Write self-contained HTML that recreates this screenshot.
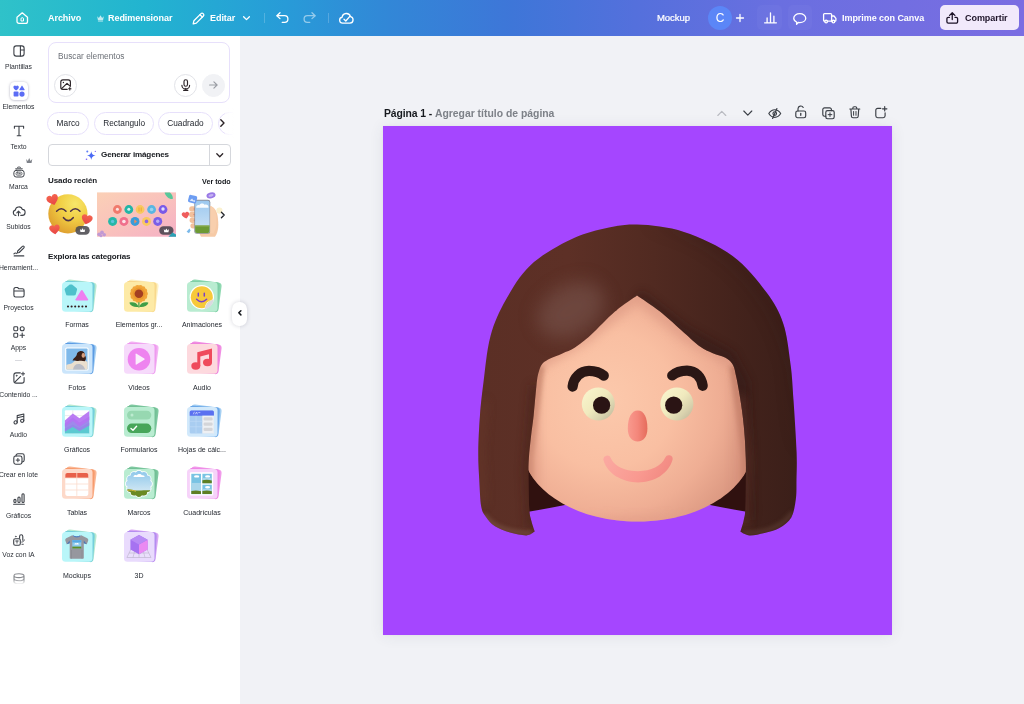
<!DOCTYPE html>
<html lang="es">
<head>
<meta charset="utf-8">
<title>Mockup - Canva</title>
<style>
*{box-sizing:border-box;margin:0;padding:0}
html,body{width:1024px;height:704px;overflow:hidden;background:#f1f2f6;font-family:"Liberation Sans",sans-serif;color:#0e1318}
.abs{position:absolute}
.t,.nav,.cat,.h,.chip,.ph,.g,#ptitle,#share span,#avatar{will-change:transform}
svg{display:block;overflow:visible}
/* ---------- top bar ---------- */
#top{position:absolute;left:0;top:0;width:1024px;height:36px;background:linear-gradient(90deg,#2fc2c9 0%,#22b4d0 14%,#289bd8 28%,#3287d7 38%,#3e76d8 50%,#5470dc 62%,#6a6fe0 76%,#7a6de2 100%)}
#top .t{position:absolute;top:12px;height:12px;line-height:12px;font-size:9px;font-weight:700;color:#fff;white-space:nowrap;letter-spacing:-.05px}
#top svg{position:absolute;fill:none;stroke:#fff;stroke-width:1.3;stroke-linecap:round;stroke-linejoin:round}
.vsep{position:absolute;top:13px;width:1px;height:10px;background:rgba(255,255,255,.2)}
.hov{position:absolute;top:5px;height:25px;border-radius:5px;background:rgba(255,255,255,.03)}
#share{position:absolute;left:940px;top:5px;width:79px;height:25px;border-radius:5px;background:#f1e9fb}
#share span{position:absolute;left:24.8px;top:7px;font-size:9px;line-height:12px;font-weight:700;color:#1d1328;letter-spacing:-.05px}
#avatar{position:absolute;left:708px;top:6px;width:24px;height:24px;border-radius:12px;background:#5b86f7;color:#fff;font-size:12px;line-height:24px;text-align:center}
/* ---------- rail ---------- */
#rail{position:absolute;left:0;top:36px;width:40px;height:668px;background:#fff}
#panel{position:absolute;left:40px;top:36px;width:200px;height:668px;background:#fff}
.nav{position:absolute;left:-10px;width:57px;text-align:center;font-size:6.8px;line-height:9px;color:#2b2f36;white-space:nowrap;letter-spacing:-.02px}
.ni{position:absolute;left:10px;width:17px;height:17px;fill:none;stroke:#3d4148;stroke-width:1.1;stroke-linecap:round;stroke-linejoin:round}
/* ---------- panel ---------- */
#search{position:absolute;left:47.500px;top:41.500px;width:182.500px;height:61px;border:1px solid #e7e0fb;border-radius:8px;background:#fff}
#search .ph{position:absolute;left:9px;top:8px;font-size:8.3px;line-height:11px;color:#6b6f76}
.cbtn{position:absolute;width:22.500px;height:22.500px;border-radius:12px;border:1px solid #e2e3e8;background:#fff}
.pic{position:absolute;fill:none;stroke:#2a2226;stroke-width:1.150;stroke-linecap:round;stroke-linejoin:round}
.chip{position:absolute;top:111.500px;height:23px;border:1px solid #e7e0fb;border-radius:12px;background:#fff;font-size:8.3px;line-height:21px;text-align:center;color:#1d2129}
#gen{position:absolute;left:47.500px;top:143.500px;width:183px;height:22.500px;border:1px solid #d5d7dc;border-radius:4px;background:#fff}
#gen .g{position:absolute;left:52.600px;top:4.800px;font-size:8.1px;letter-spacing:-.17px;line-height:11px;font-weight:700;color:#16191e;white-space:nowrap}
#gen .sep{position:absolute;left:160px;top:0;width:1px;height:20.500px;background:#d5d7dc}
.h{position:absolute;font-weight:700;color:#16191e;white-space:nowrap}
.cat{position:absolute;width:64px;text-align:center;font-size:7px;line-height:9px;color:#1d2129;white-space:nowrap}
.card{position:absolute;width:34px;height:34px}
/* ---------- canvas ---------- */
#page{position:absolute;left:383px;top:126px;width:509px;height:508.5px;background:#a546ff;overflow:hidden;box-shadow:0 1px 14px rgba(57,62,90,.09),0 0 3px rgba(57,62,90,.05)}
#ptitle{position:absolute;left:383.7px;top:106.5px;font-size:10.4px;line-height:14px;white-space:nowrap;color:#6f737b;letter-spacing:-.1px}
#ptitle b{color:#16191e;font-weight:700}
#ptitle span{font-weight:700;color:#7d8188;letter-spacing:0}
.pi{position:absolute;top:105px;width:16px;height:16px;fill:none;stroke:#3a3e45;stroke-width:1.15;stroke-linecap:round;stroke-linejoin:round}
#collapse{position:absolute;left:232.400px;top:301.800px;width:14.200px;height:23.800px;border-radius:7.100px;background:#fff;box-shadow:0 0 4px rgba(40,40,70,.2)}
</style>
</head>
<body>

<!-- ================= TOP BAR ================= -->
<div id="top">
  <!-- home -->
  <svg style="left:16px;top:12px" width="12.5" height="12" viewBox="0 0 12.5 12"><path d="M1 5.2 6.25 .8 11.5 5.2V9.4a1.9 1.9 0 0 1-1.9 1.9H2.9A1.9 1.9 0 0 1 1 9.4z"/><path d="M5 8.6V6.9a1.25 1.25 0 0 1 2.5 0v1.7z" stroke-width="1"/></svg>
  <span class="t" style="left:47.5px">Archivo</span>
  <!-- crown -->
  <svg style="left:97px;top:15px;stroke:none;fill:#fff;opacity:.72" width="7" height="6.5" viewBox="0 0 7 6.5"><path d="M.2 1.2 1.9 2.9 3.5 .3 5.1 2.9 6.8 1.2 6.1 4.9H.9z"/><rect x=".9" y="5.5" width="5.2" height=".9" rx=".3"/></svg>
  <span class="t" style="left:108px">Redimensionar</span>
  <!-- pencil -->
  <svg style="left:191.5px;top:11.5px" width="13" height="13" viewBox="0 0 13 13"><path d="M1.2 11.8l.7-3.1L9 1.6a1.5 1.5 0 0 1 2.1 0l.3.3a1.5 1.5 0 0 1 0 2.1L4.3 11.1z"/><path d="M8 2.7 10.3 5"/></svg>
  <span class="t" style="left:210px">Editar</span>
  <svg style="left:242.5px;top:16px" width="7" height="4.5" viewBox="0 0 7 4.5"><path d="M.6 .7 3.5 3.6 6.4 .7"/></svg>
  <i class="vsep" style="left:263.5px"></i>
  <!-- undo -->
  <svg style="left:276px;top:12px" width="13" height="11" viewBox="0 0 13 11"><path d="M4 .8.9 3.7 4 6.6"/><path d="M1.2 3.7H8.6a3.3 3.3 0 0 1 0 6.6H6.2"/></svg>
  <!-- redo -->
  <svg style="left:303px;top:12px;opacity:.5" width="13" height="11" viewBox="0 0 13 11"><path d="M9 .8 12.1 3.7 9 6.6"/><path d="M11.8 3.7H4.4a3.3 3.3 0 0 0 0 6.6H6.8"/></svg>
  <i class="vsep" style="left:327.5px"></i>
  <!-- cloud check -->
  <svg style="left:339px;top:11.5px" width="14.5" height="12" viewBox="0 0 14.5 12"><path d="M3.7 11.2a3 3 0 0 1-.6-5.95A4.3 4.3 0 0 1 11.5 4.6a3.35 3.35 0 0 1-.6 6.6z"/><path d="M5 7.2 6.8 9 10.6 4.6"/></svg>
  <span class="t" style="left:656.800px;font-weight:400;font-size:9.500px;-webkit-text-stroke:.22px #fff">Mockup</span>
  <div id="avatar">C</div>
  <svg style="left:735.5px;top:14px" width="8" height="8" viewBox="0 0 8 8"><path d="M4 .5v7M.5 4h7"/></svg>
  <i class="hov" style="left:756.5px;width:25px"></i>
  <i class="hov" style="left:787.5px;width:24px"></i>
  <!-- bars -->
  <svg style="left:763.5px;top:12px" width="13" height="11.5" viewBox="0 0 13 11.5"><path d="M.6 10.8H12.4M3.1 10.5V6M6.5 10.5V.8M9.9 10.5V4.2"/></svg>
  <!-- comment -->
  <svg style="left:793px;top:12.5px" width="13.5" height="12" viewBox="0 0 13.5 12"><path d="M6.75 .7c3.4 0 6 2 6 4.5s-2.6 4.4-6 4.4c-.5 0-1 0-1.5-.1L3.6 11.3V9C1.9 8.200 .75 6.8 .75 5.2.75 2.700 3.350 .7 6.750 .7z"/></svg>
  <!-- truck -->
  <svg style="left:823px;top:13px" width="13.5" height="10.5" viewBox="0 0 13.5 10.5"><path d="M1.7 8.200H1.500A.9 .9 0 0 1 .6 7.300V1.500A.9 .9 0 0 1 1.500 .6H7.700A.9 .9 0 0 1 8.600 1.500V8.200H4.500"/><path d="M8.600 3H11l1.900 2.400V7.300a.9 .9 0 0 1-.9 .9h-.3M8.600 8.200H9"/><circle cx="3.100" cy="8.600" r="1.350"/><circle cx="10.400" cy="8.600" r="1.350"/></svg>
  <span class="t" style="left:842.3px">Imprime con Canva</span>
  <div id="share"><svg style="left:6px;top:7px;stroke:#1d1328" width="12.500" height="12" viewBox="0 0 12.500 12"><path d="M6.250 7.600V.9M3.600 3.400 6.250 .8 8.900 3.400"/><path d="M3.500 5.300H2.300A1.400 1.400 0 0 0 .9 6.700V9.800A1.400 1.400 0 0 0 2.300 11.200H10.200A1.400 1.400 0 0 0 11.600 9.800V6.700A1.400 1.400 0 0 0 10.200 5.300H9"/></svg><span>Compartir</span></div>
</div>

<!-- ================= NAV RAIL ================= -->
<div id="rail"></div>
<div id="panel"></div>

<svg class="ni" style="left:12.75px;top:44.5px;width:12px;height:12px" viewBox="0 0 12 12"><rect x=".9" y=".9" width="10.2" height="10.2" rx="2.3"/><path d="M7.400 1V11M7.400 5H11"/></svg>
<div class="abs" style="left:9.5px;top:82px;width:18px;height:18px;border-radius:4.500px;background:#fff;box-shadow:0 0 3px rgba(50,50,90,.28),0 1px 2px rgba(50,50,90,.12)"></div>
<svg class="ni" style="left:12.75px;top:85px;width:12px;height:12px;fill:#5b6cf5;stroke:none" viewBox="0 0 12 12"><path d="M3.100 5.500C1.600 4.400 .4 3.400 .4 2.200A1.450 1.450 0 0 1 3.100 1.300 1.450 1.450 0 0 1 5.800 2.200C5.800 3.400 4.600 4.400 3.100 5.500z"/><path d="M8.600 .9Q9 .2 9.400 .9L11.600 4.600Q11.900 5.300 11.200 5.300H6.800Q6.100 5.300 6.400 4.600z"/><rect x=".6" y="6.600" width="4.900" height="4.900" rx=".8"/><circle cx="9" cy="9.050" r="2.600"/></svg>
<svg class="ni" style="left:12.75px;top:125.19999999999999px;width:12px;height:12px;stroke-width:1.100" viewBox="0 0 12 12"><path d="M1.400 3.200V1.300H10.600V3.200M6 1.300V10.700M4.200 10.700H7.800"/></svg>
<svg class="abs" style="left:26.200px;top:158.100px;fill:#7f838a" width="6.400" height="5.400" viewBox="0 0 7 6"><path d="M.1 1 2 3.300 3.500 .1 5 3.300 6.900 1 6.100 5.700H.9z"/></svg>
<svg class="ni" style="left:12.75px;top:165.5px;width:12px;height:12px" viewBox="0 0 12 12"><rect x=".9" y="4.300" width="10.200" height="6.700" rx="2.300" stroke-width="1"/><rect x="3" y="6.100" width="6" height="3.100" rx="1.300" stroke-width=".7"/><path d="M5.300 7.100a.65 .65 0 1 0 0 1.100M6.300 7.650a.7 .7 0 1 0 1.400 0 .7 .7 0 1 0-1.400 0" stroke-width=".55"/><path d="M2.700 2.800H9.300" stroke-width=".95"/><path d="M4.500 1.300Q6 .3 7.500 1.300" stroke-width=".9"/></svg>
<svg class="ni" style="left:12.75px;top:204.5px;width:12px;height:12px;width:13px;left:12.300px" viewBox="0 0 12 12"><path d="M3.400 10.400a2.700 2.700 0 0 1-.6-5.300 3.600 3.600 0 0 1 7-.7 3 3 0 0 1-.4 6H8.300"/><path d="M6 10.800V6.300M4.300 7.800 6 6.100 7.700 7.800"/></svg>
<svg class="ni" style="left:12.75px;top:245px;width:12px;height:12px" viewBox="0 0 12 12"><path d="M4.300 7.900 4.700 6 9.400 1.300a1.060 1.060 0 0 1 1.500 1.500L6.200 7.500z"/><path d="M.9 8.800C2 7.600 3.100 7.800 3.400 8.600M1.200 10.900H10.800"/></svg>
<svg class="ni" style="left:12.75px;top:285.6px;width:12px;height:12px" viewBox="0 0 12 12"><path d="M.9 3.200A1.700 1.700 0 0 1 2.600 1.500H4.600L5.900 2.800H9.400A1.700 1.700 0 0 1 11.100 4.500V9.300A1.700 1.700 0 0 1 9.400 11H2.600A1.700 1.700 0 0 1 .9 9.300zM.9 5H11.100"/></svg>
<svg class="ni" style="left:12.75px;top:326px;width:12px;height:12px" viewBox="0 0 12 12"><rect x=".8" y=".8" width="3.900" height="3.900" rx=".9"/><circle cx="9.200" cy="2.750" r="2"/><rect x=".8" y="7.300" width="3.900" height="3.900" rx=".9"/><path d="M9.200 7.100V11.400M7.050 9.250H11.350"/></svg>
<div class="abs" style="left:15px;top:359.500px;width:7px;height:1px;background:#d9dadf"></div>
<svg class="ni" style="left:12.75px;top:372px;width:12px;height:12px" viewBox="0 0 12 12"><path d="M7.300 .9H3.100A2.200 2.200 0 0 0 .9 3.100V8.900A2.200 2.200 0 0 0 3.100 11.100H8.900A2.200 2.200 0 0 0 11.100 8.900V5.600"/><path d="M1.600 10.300 7.600 4.300"/><path d="M10 .2V3.400M8.400 1.800H11.600" stroke-width="1"/><circle cx="3.600" cy="3.700" r=".5" fill="#33373d" stroke-width=".6"/></svg>
<svg class="ni" style="left:12.75px;top:412.8px;width:12px;height:12px" viewBox="0 0 12 12"><circle cx="2.600" cy="9.400" r="1.600"/><circle cx="9.200" cy="7.800" r="1.600"/><path d="M4.200 9.400V2.600L10.800 1V7.800M4.200 4.800 10.800 3.200"/></svg>
<svg class="ni" style="left:12.75px;top:452.7px;width:12px;height:12px" viewBox="0 0 12 12"><rect x=".8" y="3" width="8.200" height="8.200" rx="1.900"/><path d="M3 3V2.700A1.900 1.900 0 0 1 4.900 .8H9.300A1.900 1.900 0 0 1 11.200 2.700V7.100A1.900 1.900 0 0 1 9.300 9H9"/><path d="M4.900 5.400V8.800M3.200 7.100H6.600" stroke-width="1"/></svg>
<svg class="ni" style="left:12.75px;top:493px;width:12px;height:12px" viewBox="0 0 12 12"><rect x=".9" y="6.400" width="2.100" height="3.100" rx="1"/><rect x="4.950" y="4" width="2.100" height="5.500" rx="1"/><rect x="9" y=".8" width="2.100" height="8.700" rx="1"/><path d="M.6 11.300H11.400"/></svg>
<svg class="ni" style="left:12.75px;top:533.5px;width:12px;height:12px" viewBox="0 0 12 12"><rect x=".7" y="4.700" width="6.600" height="6.600" rx="1.500"/><path d="M2.700 7H5.300M4 7V9.100" stroke-width=".9"/><circle cx="2.800" cy="2.500" r=".45" fill="#33373d" stroke-width=".5"/><path d="M6.600 4.300V2.400A1.600 1.600 0 0 1 9.800 2.400V6.300"/><path d="M8.700 8.100C10.200 8 11.200 7.100 11.300 5.900M8.900 10.300H10.300" stroke-width=".9"/></svg>
<svg class="ni" style="left:12.750px;top:573.200px;width:12px;height:11px;opacity:.62" viewBox="0 0 12 11"><path d="M1 2.700C1 1.600 3.200 .8 6 .8S11 1.600 11 2.700V9C11 10.100 8.800 10.900 6 10.900S1 10.100 1 9zM1 2.700C1 3.800 3.200 4.600 6 4.600S11 3.800 11 2.700M1 5.800C1 6.900 3.200 7.700 6 7.700S11 6.900 11 5.800"/></svg>
<div class="abs" style="left:0;top:579px;width:40px;height:12px;background:linear-gradient(180deg,rgba(255,255,255,0),#fff 45%)"></div>
<div class="nav" style="top:62px">Plantillas</div>
<div class="nav" style="top:102px">Elementos</div>
<div class="nav" style="top:142px">Texto</div>
<div class="nav" style="top:182px">Marca</div>
<div class="nav" style="top:222px">Subidos</div>
<div class="nav" style="top:262.5px">Herramient...</div>
<div class="nav" style="top:303px">Proyectos</div>
<div class="nav" style="top:343px">Apps</div>
<div class="nav" style="top:389.5px">Contenido ...</div>
<div class="nav" style="top:430px">Audio</div>
<div class="nav" style="top:470px">Crear en lote</div>
<div class="nav" style="top:510.5px">Gráficos</div>
<div class="nav" style="top:550px">Voz con IA</div>

<!-- ================= PANEL ================= -->
<div id="search"><span class="ph">Buscar elementos</span></div>
<div class="cbtn" style="left:54.3px;top:74px"></div>
<div class="cbtn" style="left:174.3px;top:74px"></div>
<div class="cbtn" style="left:202px;top:74px;background:#f1f2f5;border-color:#f1f2f5"></div>
<!-- image-plus icon -->
<svg class="pic" style="left:59.7px;top:79.4px" width="11.5" height="11.5" viewBox="0 0 11.5 11.5"><path d="M7.200 10.400H2.900A2.100 2.100 0 0 1 .8 8.300V2.900A2.100 2.100 0 0 1 2.900 .8H8.300A2.100 2.100 0 0 1 10.400 2.900V6.600"/><path d="M1.600 9.700 7 4.300 10.300 7.400"/><circle cx="3.400" cy="3.500" r=".7" fill="#2a2226" stroke="none"/><path d="M9.800 8.600V11M8.600 9.800H11" stroke-width="1.100"/></svg>
<!-- mic -->
<svg class="pic" style="left:181px;top:79px" width="9.500" height="12" viewBox="0 0 9.500 12"><rect x="3" y=".7" width="3.500" height="6.500" rx="1.750"/><path d="M.9 6.200A3.850 3.850 0 0 0 8.600 6.200M4.750 9.400V11.200M2.600 11.300H6.900"/></svg>
<!-- arrow -->
<svg class="pic" style="left:208.700px;top:81.300px;stroke:#9a9da4" width="8.800" height="8" viewBox="0 0 8.800 8"><path d="M.6 4H8M4.900 .8 8.100 4 4.900 7.200"/></svg>

<div class="chip" style="left:47px;width:42.300px">Marco</div>
<div class="chip" style="left:93.800px;width:60.400px">Rectangulo</div>
<div class="chip" style="left:158.300px;width:54.900px">Cuadrado</div>
<div class="abs" style="left:215px;top:108px;width:25px;height:30px;overflow:hidden"><div class="chip" style="left:2.600px;top:3.500px;width:40px"></div></div>
<div class="abs" style="left:225px;top:108px;width:15px;height:30px;background:linear-gradient(90deg,rgba(255,255,255,.55),#fff 60%)"></div>
<svg class="pic" style="left:220.300px;top:118.500px;stroke-width:1.400" width="5" height="8" viewBox="0 0 5 8"><path d="M.8 .8 4 4 .8 7.200"/></svg>

<div id="gen"><svg class="abs" style="left:36px;top:5px" width="11.500" height="11" viewBox="0 0 11.500 11"><path d="M6.300 1.200C6.800 4 7.600 4.900 10.600 5.600 7.600 6.300 6.800 7.200 6.300 10 5.800 7.200 5 6.300 2 5.600 5 4.900 5.800 4 6.300 1.200z" fill="#4a6af5"/><circle cx="2.300" cy="1.500" r="1" fill="#5b7cf8"/><circle cx="1.500" cy="9.300" r=".8" fill="#7d5cf5"/><circle cx="10.300" cy="1.400" r=".6" fill="#7d5cf5"/></svg><span class="g">Generar imágenes</span><i class="sep"></i><svg class="pic" style="left:167.500px;top:8.700px;stroke-width:1.300" width="7.500" height="4.800" viewBox="0 0 7.500 4.800"><path d="M.8 .8 3.750 3.800 6.700 .8"/></svg></div>

<div class="h" style="left:47.6px;top:175px;font-size:8px;line-height:12px;letter-spacing:-.1px">Usado recién</div>
<div class="h" style="left:201.5px;top:176px;font-size:7.2px;line-height:11px">Ver todo</div>
<!-- recently used -->
<svg class="abs" style="left:44px;top:188px" width="196" height="54" viewBox="44 188 196 54">
<defs>
<radialGradient id="em" cx=".68" cy=".25" r=".85"><stop offset="0" stop-color="#f7e66a"/><stop offset=".45" stop-color="#f1cf45"/><stop offset="1" stop-color="#dd9a2c"/></radialGradient>
<linearGradient id="pk" x1="0" y1="0" x2="1" y2="1"><stop offset="0" stop-color="#fbd0b6"/><stop offset=".55" stop-color="#f9c0bd"/><stop offset="1" stop-color="#f5b0c6"/></linearGradient>
<linearGradient id="sky" x1="0" y1="0" x2="0" y2="1"><stop offset="0" stop-color="#9cc8ef"/><stop offset="1" stop-color="#cfe4f6"/></linearGradient>
<linearGradient id="ht" x1="0" y1="0" x2="0" y2="1"><stop offset="0" stop-color="#f4644f"/><stop offset="1" stop-color="#e84545"/></linearGradient>
</defs>
<!-- emoji -->
<circle cx="67.900" cy="213.800" r="19.600" fill="url(#em)"/>
<path d="M56.600 211.300Q61.300 206.300 66 211.300M70.600 211.300Q75.300 206.300 80 211.300" fill="none" stroke="#4d3248" stroke-width="1.500" stroke-linecap="round"/>
<path d="M63.500 217.700Q68.300 223.600 73.200 217.700" fill="none" stroke="#4d3248" stroke-width="1.600" stroke-linecap="round"/>
<path d="M0 3.400C-2.600 1.500-4.600-.3-4.600-2.300A2.450 2.450 0 0 1 0-3.400 2.450 2.450 0 0 1 4.600-2.300C4.600-.3 2.600 1.500 0 3.400z" fill="url(#ht)" transform="translate(53 200.800) rotate(-18) scale(1.280)"/>
<path d="M0 3.400C-2.600 1.500-4.600-.3-4.600-2.300A2.450 2.450 0 0 1 0-3.400 2.450 2.450 0 0 1 4.600-2.300C4.600-.3 2.600 1.500 0 3.400z" fill="url(#ht)" transform="translate(86.600 220.300) rotate(14) scale(1.200)"/>
<path d="M0 3.400C-2.600 1.500-4.600-.3-4.600-2.300A2.450 2.450 0 0 1 0-3.400 2.450 2.450 0 0 1 4.600-2.300C4.600-.3 2.600 1.500 0 3.400z" fill="url(#ht)" transform="translate(54.800 230.300) rotate(-8) scale(1.150)"/>
<rect x="75.400" y="226.100" width="14.300" height="8.600" rx="4.300" fill="#4b4a50" opacity=".88"/>
<g transform="translate(82.550 230.500)"><path d="M-2.600 -1.500 -1.250 -.2 0 -2.200 1.250 -.2 2.600 -1.500 2.100 1.600H-2.100z" fill="#fff"/></g>
<!-- pink banner -->
<rect x="97" y="192.400" width="79" height="44.300" fill="url(#pk)"/>
<g>
<circle cx="117.400" cy="209.500" r="4.400" fill="#f07a6c"/><circle cx="128.800" cy="209.500" r="4.400" fill="#22b5a6"/><circle cx="140.100" cy="209.500" r="4.400" fill="#f9c85e"/><circle cx="151.600" cy="209.500" r="4.400" fill="#5ab6e2"/><circle cx="163" cy="209.500" r="4.400" fill="#7a5ae8"/>
<circle cx="112.600" cy="221.400" r="4.500" fill="#24b8a8"/><circle cx="123.900" cy="221.400" r="4.500" fill="#f0708c"/><circle cx="135" cy="221.400" r="4.500" fill="#3a9cd9"/><circle cx="146.500" cy="221.400" r="4.500" fill="#f9c85e"/><circle cx="157.700" cy="221.400" r="4.500" fill="#7a5ee8"/>
<g fill="#fff" opacity=".8"><circle cx="117.400" cy="209.300" r="1.500"/><circle cx="128.800" cy="209.300" r="1.500"/><circle cx="151.600" cy="209.500" r="1.800" opacity=".5"/><circle cx="163" cy="209" r="1.700"/><circle cx="123.900" cy="221.500" r="1.800"/><circle cx="157.700" cy="221.200" r="1.700" opacity=".6"/></g>
<circle cx="146.500" cy="221.400" r="1.800" fill="#8a66e8"/><circle cx="112.600" cy="221.400" r="1.700" fill="#69c8e8" opacity=".8"/><path d="M134.300 219.200 137 221.400 134.300 223.600z" fill="#f08a5a"/><path d="M139 207.500V211.500M141.200 207.500V211.500" stroke="#f2a030" stroke-width=".9"/>
</g>
<path d="M164.600 192.400C165.500 196 169 199.500 172.700 199 173.300 196.500 171.500 193.500 169.800 192.400z" fill="#58c79a"/>
<g fill="#b793d9" opacity=".85"><circle cx="99.200" cy="234.300" r="1.900"/><circle cx="102" cy="232.400" r="1.900"/><circle cx="104.200" cy="234.800" r="1.800"/><circle cx="101" cy="235.800" r="1.500"/></g>
<rect x="159.200" y="226.300" width="14.300" height="8.500" rx="4.250" fill="#4b4550" opacity=".9"/>
<g transform="translate(166.350 230.600)"><path d="M-2.600 -1.500 -1.250 -.2 0 -2.200 1.250 -.2 2.600 -1.500 2.100 1.600H-2.100z" fill="#fff"/></g>
<path d="M168.400 236.700 172.500 232.500 176 234.500V236.700z" fill="#2ba1b5"/>
<!-- phone in hand -->
<path d="M206 206.500C212 204.500 216.500 209 217.600 216 218.800 224 218.800 231.500 215 236.800H201C199 233 197 229 197 222z" fill="#f6caa6"/>
<g fill="#f2c09b"><rect x="189.200" y="206.200" width="7" height="5.400" rx="2.700"/><rect x="189" y="211.800" width="7" height="5.600" rx="2.800"/><rect x="189.600" y="217.600" width="6.600" height="5.400" rx="2.700"/><rect x="190.400" y="223.200" width="6" height="5.200" rx="2.600"/></g>
<g fill="#e27a6a"><circle cx="194.300" cy="209" r=".8"/><circle cx="194.200" cy="214.600" r=".8"/><circle cx="194.500" cy="220.200" r=".8"/></g>
<rect x="194.300" y="199.800" width="16" height="34" rx="2.400" fill="#8b909c"/>
<rect x="195.100" y="200.700" width="14.400" height="32.300" rx="1.800" fill="url(#sky)"/>
<path d="M195.100 225.500H209.500V231.200A1.800 1.800 0 0 1 207.700 233H196.900A1.800 1.800 0 0 1 195.100 231.200z" fill="#6d9a34"/>
<path d="M195.100 225.500H209.500V226.600H195.100z" fill="#8eae52"/>
<path d="M196.200 207.800C196 205.500 198 204.700 199.300 205.300 200 203.300 203.500 203 204.500 204.800 206.500 204 208.700 205 208.500 207.800z" fill="#fff" opacity=".92"/>
<path d="M210.300 206C213.500 206.500 215.800 210.500 216.300 216.500 216.800 223 216.200 229 213.500 233.500L210.300 233z" fill="#f8cfad"/>
<g transform="rotate(14 192.600 199.200)"><rect x="188.400" y="195.400" width="8.400" height="7.600" rx="1.700" fill="#6d9df2"/><path d="M190 201.300 192 198.500 193.600 200.300 194.600 199.300 195.700 201.300z" fill="#dfeafc"/></g>
<ellipse cx="211" cy="195.400" rx="4.600" ry="3" fill="#9a7ae6" transform="rotate(-14 211 195.400)"/><ellipse cx="211" cy="195.400" rx="2.600" ry="1.300" fill="#c4b2f2" transform="rotate(-14 211 195.400)"/>
<path d="M0 3.400C-2.600 1.500-4.600-.3-4.600-2.300A2.450 2.450 0 0 1 0-3.400 2.450 2.450 0 0 1 4.600-2.300C4.600-.3 2.600 1.500 0 3.400z" fill="#ef5d5d" transform="translate(185.800 215.800) rotate(-12) scale(.82)"/>
<path d="M186.600 231.800 189.400 228.600 190.600 230.400 189 233.200z" fill="#7ab9ea"/>
<circle cx="219.400" cy="210.600" r="3.100" fill="#fbf1cf"/>
<path d="M221.400 212.200 224.200 215 221.400 217.800" fill="none" stroke="#23252b" stroke-width="1.300" stroke-linecap="round" stroke-linejoin="round"/>
</svg>
<div class="h" style="left:47.6px;top:250.5px;font-size:8px;line-height:12px;letter-spacing:-.12px">Explora las categorías</div>

<!--CARDS-->
<svg class="abs" style="left:57.8px;top:277.2px" width="42" height="40" viewBox="0 0 42 40">
<rect x="4" y="5" width="30.5" height="29.8" rx="3.6" fill="#b9ead0" transform="translate(2.7 -1.1) rotate(7.500 19.25 19.9)"/>
<rect x="4" y="5" width="30.5" height="29.8" rx="3.6" fill="#74cfdb" transform="translate(1.500 -.5) rotate(3.800 19.25 19.9)"/>
<rect x="4" y="5" width="30.5" height="29.8" rx="3.600" fill="#b9f6f9"/>
<g transform="translate(4 5)"><path d="M8.800 2.600C9.800 2.100 10.600 2.900 11.300 3.600L14.600 6.200C15.300 6.700 15.100 7.500 14.900 8.300L13.800 12.300C13.600 13.200 12.900 13.400 12.100 13.400H5.700C4.900 13.400 4.200 13.200 4 12.300L2.800 8.300C2.600 7.500 2.500 6.700 3.200 6.200L6.500 3.600C7.200 3 7.900 2.200 8.800 2.600z" fill="#4fc1cb"/><path d="M18.800 8.800Q19.800 7.200 20.800 8.800L26 17.200Q26.600 18.600 25 18.600H14.600Q13 18.600 13.600 17.200z" fill="#ee80f0"/><g fill="#33191b"><circle cx="6" cy="24.500" r="1.050"/><circle cx="9.600" cy="24.500" r="1.050"/><circle cx="13.200" cy="24.500" r="1.050"/><circle cx="16.800" cy="24.500" r="1.050"/><circle cx="20.400" cy="24.500" r="1.050"/><circle cx="24" cy="24.500" r="1.050"/></g></g>
</svg>
<svg class="abs" style="left:120.3px;top:277.2px" width="42" height="40" viewBox="0 0 42 40">
<rect x="4" y="5" width="30.5" height="29.8" rx="3.6" fill="#fdf1c4" transform="translate(2.7 -1.1) rotate(7.500 19.25 19.9)"/>
<rect x="4" y="5" width="30.5" height="29.8" rx="3.6" fill="#f8d88c" transform="translate(1.500 -.5) rotate(3.800 19.25 19.9)"/>
<rect x="4" y="5" width="30.5" height="29.8" rx="3.600" fill="#fdeaa6"/>
<g transform="translate(4 5)"><path d="M14.300 17H15.500V25.500H14.300z" fill="#3c9a45"/><path d="M14.600 24.800C11 25.500 6.800 24.500 5.300 20.800 9 19.500 13 20.800 14.600 24.800zM15.200 24.800C18.800 25.500 23 24.500 24.500 20.800 20.800 19.500 16.800 20.800 15.200 24.800z" fill="#3f9e48"/><g fill="#f2a63a"><circle cx="21.60" cy="11.80" r="2.300"/><circle cx="20.94" cy="14.71" r="2.300"/><circle cx="19.08" cy="17.04" r="2.300"/><circle cx="16.39" cy="18.33" r="2.300"/><circle cx="13.41" cy="18.33" r="2.300"/><circle cx="10.72" cy="17.04" r="2.300"/><circle cx="8.86" cy="14.71" r="2.300"/><circle cx="8.20" cy="11.80" r="2.300"/><circle cx="8.86" cy="8.89" r="2.300"/><circle cx="10.72" cy="6.56" r="2.300"/><circle cx="13.41" cy="5.27" r="2.300"/><circle cx="16.39" cy="5.27" r="2.300"/><circle cx="19.08" cy="6.56" r="2.300"/><circle cx="20.94" cy="8.89" r="2.300"/><circle cx="14.900" cy="11.800" r="6.800"/></g><circle cx="14.900" cy="11.800" r="6.200" fill="#eb9a2f"/><circle cx="14.900" cy="11.800" r="4.300" fill="#a43f22"/></g>
</svg>
<svg class="abs" style="left:183.1px;top:277.2px" width="42" height="40" viewBox="0 0 42 40">
<rect x="4" y="5" width="30.5" height="29.8" rx="3.6" fill="#8fd9b1" transform="translate(2.7 -1.1) rotate(7.500 19.25 19.9)"/>
<rect x="4" y="5" width="30.5" height="29.8" rx="3.6" fill="#7fcfa6" transform="translate(1.500 -.5) rotate(3.800 19.25 19.9)"/>
<rect x="4" y="5" width="30.5" height="29.8" rx="3.600" fill="#b9ecd1"/>
<g transform="translate(4 5)"><circle cx="14.800" cy="15.200" r="12.200" fill="#fff"/><circle cx="14.800" cy="15.200" r="11" fill="#f7c93a"/><path d="M11.300 11.300V14M17.300 11.300V14" stroke="#7a3fc8" stroke-width="1.500" stroke-linecap="round"/><path d="M9.600 17.300Q14.500 22.200 19.600 17.300" fill="none" stroke="#7a3fc8" stroke-width="1.500" stroke-linecap="round"/><path d="M26.800 17.500C26 22.500 23 26 17.600 27.200 18.500 23 21.500 18.500 26.800 17.500z" fill="#d9dadf"/><path d="M26.800 17.500C22.500 18.200 19 21.500 17.600 27.200 17.800 22 21 18 26.800 17.500z" fill="#fff"/></g>
</svg>
<svg class="abs" style="left:57.8px;top:339.4px" width="42" height="40" viewBox="0 0 42 40">
<rect x="4" y="5" width="30.5" height="29.8" rx="3.6" fill="#a5cff2" transform="translate(2.7 -1.1) rotate(7.500 19.25 19.9)"/>
<rect x="4" y="5" width="30.5" height="29.8" rx="3.6" fill="#5b9be3" transform="translate(1.500 -.5) rotate(3.800 19.25 19.9)"/>
<rect x="4" y="5" width="30.5" height="29.8" rx="3.600" fill="#cbe5fb"/>
<g transform="translate(4 5)"><rect x="3.200" y="3.400" width="23.400" height="23.200" rx="1.500" fill="#fff"/><rect x="4.300" y="4.500" width="21.200" height="21" rx=".8" fill="#7fb9ea"/><path d="M4.300 21C7 19.500 9 20.500 11 18.500 13 16 16 15.500 19 15.500 22.500 15.500 25.500 17.500 25.500 19V25.500H4.300z" fill="#eadfce"/><path d="M11 25.500C11.500 22 13.500 20 16.500 20 20 20 22.500 22.500 23 25.500z" fill="#b9bcc6"/><path d="M17.800 7.200C21 6.500 23.300 8.800 23 11.500 24.500 13.500 24 16 22.800 17.200 21 16.800 19.500 16.500 18 16.800 14 17.500 12 15.500 10.600 17 11.500 13.500 14.500 13 14.800 10.500 15 8.800 16 7.600 17.800 7.200z" fill="#3a2019"/><ellipse cx="21.300" cy="11.400" rx="1.700" ry="2.300" fill="#d9a182"/></g>
</svg>
<svg class="abs" style="left:120.3px;top:339.4px" width="42" height="40" viewBox="0 0 42 40">
<rect x="4" y="5" width="30.5" height="29.8" rx="3.6" fill="#f3b3f3" transform="translate(2.7 -1.1) rotate(7.500 19.25 19.9)"/>
<rect x="4" y="5" width="30.5" height="29.8" rx="3.6" fill="#ee9aef" transform="translate(1.500 -.5) rotate(3.800 19.25 19.9)"/>
<rect x="4" y="5" width="30.5" height="29.8" rx="3.600" fill="#f6dafb"/>
<g transform="translate(4 5)"><circle cx="15" cy="15.200" r="11.300" fill="#ee84ef"/><path d="M11.600 10.200Q11.600 9.300 12.500 9.800L20.300 14.500Q21.100 15.200 20.300 15.800L12.500 20.500Q11.600 21 11.600 20.100z" fill="#fbeefc"/></g>
</svg>
<svg class="abs" style="left:183.1px;top:339.4px" width="42" height="40" viewBox="0 0 42 40">
<rect x="4" y="5" width="30.5" height="29.8" rx="3.6" fill="#f08fe3" transform="translate(2.7 -1.1) rotate(7.500 19.25 19.9)"/>
<rect x="4" y="5" width="30.5" height="29.8" rx="3.6" fill="#ee82dc" transform="translate(1.500 -.5) rotate(3.800 19.25 19.9)"/>
<rect x="4" y="5" width="30.5" height="29.8" rx="3.600" fill="#fdd9de"/>
<g transform="translate(4 5)"><path d="M10.300 8.200 25 4.600V18.400H22V10.300L13.300 12.500V22H10.300z" fill="#ef4a5c"/><ellipse cx="8.800" cy="22" rx="4.500" ry="3.700" fill="#ef4a5c"/><ellipse cx="20.500" cy="18.500" rx="4.500" ry="3.700" fill="#ef4a5c"/></g>
</svg>
<svg class="abs" style="left:57.8px;top:402.0px" width="42" height="40" viewBox="0 0 42 40">
<rect x="4" y="5" width="30.5" height="29.8" rx="3.6" fill="#b9ead0" transform="translate(2.7 -1.1) rotate(7.500 19.25 19.9)"/>
<rect x="4" y="5" width="30.5" height="29.8" rx="3.6" fill="#74cfdb" transform="translate(1.500 -.5) rotate(3.800 19.25 19.9)"/>
<rect x="4" y="5" width="30.5" height="29.8" rx="3.600" fill="#b9f6f9"/>
<g transform="translate(4 5)"><rect x="2.900" y="3.300" width="24.400" height="23.300" rx="1" fill="#fff"/><path d="M2.900 8.600H27.300M2.900 13.600H27.300M10.800 3.300V26.600" stroke="#e3e3e8" stroke-width=".7"/><path d="M2.900 21.500 10.800 17.500 17.500 21 27.300 15.500V26.600H2.900z" fill="#5cc9d1"/><path d="M2.900 16.500 10.800 10.500 17.500 15.500 27.300 9.500V18.500L17.500 24 10.800 20 2.900 24.500z" fill="#9a83ea" opacity=".95"/><path d="M2.900 13.500 10.800 6.600 17.500 11.300 27.300 4V13L17.500 19.500 10.800 14 2.900 19.500z" fill="#b472f2" opacity=".92"/></g>
</svg>
<svg class="abs" style="left:120.3px;top:402.0px" width="42" height="40" viewBox="0 0 42 40">
<rect x="4" y="5" width="30.5" height="29.8" rx="3.6" fill="#7fc9a1" transform="translate(2.7 -1.1) rotate(7.500 19.25 19.9)"/>
<rect x="4" y="5" width="30.5" height="29.8" rx="3.6" fill="#73c096" transform="translate(1.500 -.5) rotate(3.800 19.25 19.9)"/>
<rect x="4" y="5" width="30.5" height="29.8" rx="3.600" fill="#b9ecd1"/>
<g transform="translate(4 5)"><rect x="3" y="3.700" width="24.300" height="8.800" rx="4.400" fill="#97d8b1"/><circle cx="8" cy="8.100" r="1.500" fill="#bdebd0"/><rect x="3" y="16.600" width="24.300" height="9.500" rx="4.750" fill="#47a65a"/><path d="M7 21.500 9 23.300 12.600 19.300" fill="none" stroke="#fff" stroke-width="1.400" stroke-linecap="round" stroke-linejoin="round"/></g>
</svg>
<svg class="abs" style="left:183.1px;top:402.0px" width="42" height="40" viewBox="0 0 42 40">
<rect x="4" y="5" width="30.5" height="29.8" rx="3.6" fill="#a5cff2" transform="translate(2.7 -1.1) rotate(7.500 19.25 19.9)"/>
<rect x="4" y="5" width="30.5" height="29.8" rx="3.6" fill="#6aa7e8" transform="translate(1.500 -.5) rotate(3.800 19.25 19.9)"/>
<rect x="4" y="5" width="30.5" height="29.8" rx="3.600" fill="#d2e9fb"/>
<g transform="translate(4 5)"><rect x="2.700" y="3.400" width="24.200" height="23.200" rx="1.500" fill="#a9cdf1"/><path d="M2.700 4.900A1.500 1.500 0 0 1 4.200 3.400H25.400A1.500 1.500 0 0 1 26.900 4.900V8.700H2.700z" fill="#5a70f0"/><path d="M6.300 7.300 7.400 4.800M8.300 7.300 9.600 5 10.400 7.300M11.300 5.600H13.300" stroke="#dfe6fd" stroke-width=".7" fill="none"/><rect x="15.300" y="8.700" width="11.600" height="17.900" fill="#eef0f3"/><g fill="#d4d5d9"><rect x="16.600" y="10.300" width="9" height="3.200" rx="1.200"/><rect x="16.600" y="15.500" width="9" height="3.200" rx="1.200"/><rect x="16.600" y="20.700" width="9" height="3.200" rx="1.200"/></g><path d="M2.700 14.300H15.300M2.700 19.800H15.300M9 8.700V26.600" stroke="#c3dcf6" stroke-width=".6"/></g>
</svg>
<svg class="abs" style="left:57.8px;top:464.2px" width="42" height="40" viewBox="0 0 42 40">
<rect x="4" y="5" width="30.5" height="29.8" rx="3.6" fill="#fbb795" transform="translate(2.7 -1.1) rotate(7.500 19.25 19.9)"/>
<rect x="4" y="5" width="30.5" height="29.8" rx="3.6" fill="#f69a6c" transform="translate(1.500 -.5) rotate(3.800 19.25 19.9)"/>
<rect x="4" y="5" width="30.5" height="29.8" rx="3.600" fill="#fdd9c9"/>
<g transform="translate(4 5)"><rect x="3.300" y="3.900" width="23" height="23" rx="1.800" fill="#fff"/><path d="M3.300 5.700A1.800 1.800 0 0 1 5.100 3.900H24.500A1.800 1.800 0 0 1 26.300 5.700V9H3.300z" fill="#e8604a"/><path d="M14.800 3.900V26.900M3.300 9H26.300M3.300 15H26.300M3.300 21H26.300" stroke="#fbdccd" stroke-width=".8"/></g>
</svg>
<svg class="abs" style="left:120.3px;top:464.2px" width="42" height="40" viewBox="0 0 42 40">
<rect x="4" y="5" width="30.5" height="29.8" rx="3.6" fill="#7fc9a1" transform="translate(2.7 -1.1) rotate(7.500 19.25 19.9)"/>
<rect x="4" y="5" width="30.5" height="29.8" rx="3.6" fill="#73c096" transform="translate(1.500 -.5) rotate(3.800 19.25 19.9)"/>
<rect x="4" y="5" width="30.5" height="29.8" rx="3.600" fill="#b9ecd1"/>
<g transform="translate(4 5)"><defs><clipPath id="scl"><circle cx="24.50" cy="14.80" r="3.500"/><circle cx="23.21" cy="19.60" r="3.500"/><circle cx="19.70" cy="23.11" r="3.500"/><circle cx="14.90" cy="24.40" r="3.500"/><circle cx="10.10" cy="23.11" r="3.500"/><circle cx="6.59" cy="19.60" r="3.500"/><circle cx="5.30" cy="14.80" r="3.500"/><circle cx="6.59" cy="10.00" r="3.500"/><circle cx="10.10" cy="6.49" r="3.500"/><circle cx="14.90" cy="5.20" r="3.500"/><circle cx="19.70" cy="6.49" r="3.500"/><circle cx="23.21" cy="10.00" r="3.500"/><circle cx="14.900" cy="14.800" r="10.500"/></clipPath><linearGradient id="sk2" x1="0" y1="0" x2="0" y2="1"><stop offset="0" stop-color="#8ac6ea"/><stop offset=".75" stop-color="#cfe6f3"/></linearGradient></defs><g fill="#fff"><circle cx="24.50" cy="14.80" r="4.300"/><circle cx="23.21" cy="19.60" r="4.300"/><circle cx="19.70" cy="23.11" r="4.300"/><circle cx="14.90" cy="24.40" r="4.300"/><circle cx="10.10" cy="23.11" r="4.300"/><circle cx="6.59" cy="19.60" r="4.300"/><circle cx="5.30" cy="14.80" r="4.300"/><circle cx="6.59" cy="10.00" r="4.300"/><circle cx="10.10" cy="6.49" r="4.300"/><circle cx="14.90" cy="5.20" r="4.300"/><circle cx="19.70" cy="6.49" r="4.300"/><circle cx="23.21" cy="10.00" r="4.300"/><circle cx="14.900" cy="14.800" r="11"/></g><g clip-path="url(#scl)"><rect x="1" y="1" width="28" height="28" fill="url(#sk2)"/><path d="M9.500 8C9.500 6 12 5.500 12.800 6.500 13.500 4.500 17 4.500 17.800 6.300 19.500 5.800 21 7 20.500 8z" fill="#fff"/><path d="M1 21C5 19.500 8 21 11 21.500 15 22 20 20.500 29 21.500V29H1z" fill="#6b8a22"/><path d="M3 21.500C6 20.500 9 21.500 12 22.200" stroke="#d8b93a" stroke-width="1" fill="none"/></g></g>
</svg>
<svg class="abs" style="left:183.1px;top:464.2px" width="42" height="40" viewBox="0 0 42 40">
<rect x="4" y="5" width="30.5" height="29.8" rx="3.6" fill="#f19bea" transform="translate(2.7 -1.1) rotate(7.500 19.25 19.9)"/>
<rect x="4" y="5" width="30.5" height="29.8" rx="3.6" fill="#ee86e6" transform="translate(1.500 -.5) rotate(3.800 19.25 19.9)"/>
<rect x="4" y="5" width="30.5" height="29.8" rx="3.600" fill="#f6d3f9"/>
<g transform="translate(4 5)"><rect x="2.900" y="3.300" width="23.300" height="23.300" rx="1" fill="#fff"/><rect x="4.3" y="4.8" width="9.7" height="20.3" fill="#79c3e3"/><rect x="4.3" y="13.93" width="9.7" height="11.17" fill="#a9d6ea"/><path d="M4.3 22.10Q9.15 20.90 14.0 22.30V25.1H4.3z" fill="#5e7f22"/><ellipse cx="9.65" cy="7.40" rx="2.62" ry="1.200" fill="#fff"/><rect x="15.4" y="4.8" width="9.4" height="9.4" fill="#79c3e3"/><rect x="15.4" y="9.03" width="9.4" height="5.17" fill="#a9d6ea"/><path d="M15.4 11.20Q20.10 10.00 24.8 11.40V14.2H15.4z" fill="#5e7f22"/><ellipse cx="20.60" cy="7.40" rx="2.54" ry="1.200" fill="#fff"/><rect x="15.4" y="15.7" width="9.4" height="9.4" fill="#79c3e3"/><rect x="15.4" y="19.93" width="9.4" height="5.17" fill="#a9d6ea"/><path d="M15.4 22.10Q20.10 20.90 24.8 22.30V25.1H15.4z" fill="#5e7f22"/><ellipse cx="20.60" cy="18.30" rx="2.54" ry="1.200" fill="#fff"/></g>
</svg>
<svg class="abs" style="left:57.8px;top:526.6px" width="42" height="40" viewBox="0 0 42 40">
<rect x="4" y="5" width="30.5" height="29.8" rx="3.6" fill="#b9ead0" transform="translate(2.7 -1.1) rotate(7.500 19.25 19.9)"/>
<rect x="4" y="5" width="30.5" height="29.8" rx="3.6" fill="#74cfdb" transform="translate(1.500 -.5) rotate(3.800 19.25 19.9)"/>
<rect x="4" y="5" width="30.5" height="29.8" rx="3.600" fill="#b9f6f9"/>
<g transform="translate(4 5)"><path d="M10.300 3.300C12 4.600 17.500 4.600 19.200 3.300L25.300 6.300Q26.600 7.200 26.200 8.600L24.800 12.200 21.800 11.300V26Q21.800 26.800 21 26.800H8.500Q7.700 26.800 7.700 26V11.300L4.700 12.200 3.300 8.600Q2.900 7.200 4.200 6.300z" fill="#96979e"/><path d="M11.300 3.700C13 5.300 16.500 5.300 18.200 3.700" fill="none" stroke="#3f78c9" stroke-width="1"/><path d="M4.700 12.200 7.700 11.300V8.500zM24.800 12.200 21.800 11.300V8.500z" fill="#4a77b8"/><rect x="10.300" y="8.200" width="9" height="8.300" fill="#8ecbee"/><rect x="10.300" y="8.200" width="9" height="2.200" fill="#56a9e3"/><path d="M12.500 12.500C12.500 11.300 13.800 11 14.300 11.600 14.800 10.600 16.600 10.800 16.800 12.500z" fill="#fff"/><rect x="10.300" y="14.600" width="9" height="1.900" fill="#5f8f24"/><path d="M9.500 18V26.800M20 18V26.800" stroke="#7a7b82" stroke-width=".6" opacity=".6"/></g>
</svg>
<svg class="abs" style="left:120.3px;top:526.6px" width="42" height="40" viewBox="0 0 42 40">
<rect x="4" y="5" width="30.5" height="29.8" rx="3.6" fill="#d9a8f3" transform="translate(2.7 -1.1) rotate(7.500 19.25 19.9)"/>
<rect x="4" y="5" width="30.5" height="29.8" rx="3.6" fill="#b48df0" transform="translate(1.500 -.5) rotate(3.800 19.25 19.9)"/>
<rect x="4" y="5" width="30.5" height="29.8" rx="3.600" fill="#e9dbfd"/>
<g transform="translate(4 5)"><path d="M7.300 16.500 2.900 25.500H27L22.600 16.500z" fill="#eadffc" stroke="#b8b0c8" stroke-width=".6" stroke-linejoin="round"/><path d="M5.100 21H24.800M15 16.500V25.500M11.300 16.500 9 25.500M18.600 16.500 21 25.500" stroke="#b8b0c8" stroke-width=".55" fill="none"/><path d="M15 3 23.600 7.800V17.400L15 22.300 6.400 17.400V7.800z" fill="#a672f1"/><path d="M15 12.600 23.600 7.800V17.400L15 22.300z" fill="#ea8af2"/><path d="M15 3 23.600 7.800 15 12.600 6.400 7.800z" fill="#b88af5"/></g>
</svg>
<!--/CARDS-->
<div class="cat" style="left:45px;top:320px">Formas</div>
<div class="cat" style="left:107px;top:320px">Elementos gr...</div>
<div class="cat" style="left:169.5px;top:320px">Animaciones</div>
<div class="cat" style="left:45px;top:382.5px">Fotos</div>
<div class="cat" style="left:107px;top:382.5px">Videos</div>
<div class="cat" style="left:169.5px;top:382.5px">Audio</div>
<div class="cat" style="left:45px;top:445px">Gráficos</div>
<div class="cat" style="left:107px;top:445px">Formularios</div>
<div class="cat" style="left:169.5px;top:445px">Hojas de cálc...</div>
<div class="cat" style="left:45px;top:507.5px">Tablas</div>
<div class="cat" style="left:107px;top:507.5px">Marcos</div>
<div class="cat" style="left:169.5px;top:507.5px">Cuadrículas</div>
<div class="cat" style="left:45px;top:570.5px">Mockups</div>
<div class="cat" style="left:107px;top:570.5px">3D</div>

<div id="collapse"><svg class="pic" style="left:5.500px;top:8.300px;stroke-width:1.500;stroke:#16191e" width="3.600" height="5.600" viewBox="0 0 3.600 5.600"><path d="M2.900 .7 .8 2.800 2.900 4.900"/></svg></div>

<!-- ================= CANVAS ================= -->
<!-- page toolbar -->
<svg class="pi" style="left:716.500px;top:109.500px;width:9.600px;height:6.400px;stroke:#b9bbc1" viewBox="0 0 9.600 6.400"><path d="M.8 5.500 4.800 1.300 8.800 5.500"/></svg>
<svg class="pi" style="left:743px;top:109.600px;width:9.600px;height:6.400px" viewBox="0 0 9.600 6.400"><path d="M.8 1 4.800 5.200 8.800 1"/></svg>
<svg class="pi" style="left:767.500px;top:107.500px;width:13.500px;height:11px" viewBox="0 0 13.500 11"><path d="M.8 5.500C2.300 3 4.300 1.700 6.750 1.700S11.200 3 12.700 5.500C11.200 8 9.200 9.300 6.750 9.300S2.300 8 .8 5.500z"/><circle cx="6.750" cy="5.500" r="1.800"/><path d="M8.900 .6 4.600 10.400" stroke-width="1.200"/></svg>
<svg class="pi" style="left:795.300px;top:105.300px;width:11.500px;height:13.500px" viewBox="0 0 11.500 13.500"><rect x=".8" y="6" width="9.900" height="6.700" rx="1.700"/><path d="M3 6V3.700A2.750 2.750 0 0 1 8.200 2.500"/><path d="M5.750 8.500V10.300" stroke-width="1.300"/></svg>
<svg class="pi" style="left:821.700px;top:106.500px;width:13px;height:12.500px" viewBox="0 0 13 12.500"><rect x="3.800" y="3.600" width="8.400" height="8.100" rx="1.700"/><path d="M3.800 9.200H2.500A1.700 1.700 0 0 1 .8 7.500V2.500A1.700 1.700 0 0 1 2.500 .8H7.700A1.700 1.700 0 0 1 9.400 2.500V3.600"/><path d="M8 5.800V9.500M6.150 7.650H9.850" stroke-width="1"/></svg>
<svg class="pi" style="left:849px;top:106.300px;width:11.600px;height:12.600px" viewBox="0 0 11.600 12.600"><path d="M.8 3H10.800M3.800 2.800V2.200A1.400 1.400 0 0 1 5.200 .8H6.400A1.400 1.400 0 0 1 7.800 2.200V2.800M1.900 3.200 2.400 10.300A1.600 1.600 0 0 0 4 11.800H7.600A1.600 1.600 0 0 0 9.200 10.300L9.700 3.200"/><path d="M4.600 5.500V9.300M7 5.500V9.300" stroke-width="1"/></svg>
<svg class="pi" style="left:875.300px;top:105.800px;width:12.500px;height:12.500px" viewBox="0 0 12.500 12.500"><path d="M5.800 2.400H2.700A1.900 1.900 0 0 0 .8 4.300V9.800A1.900 1.900 0 0 0 2.700 11.700H8.200A1.900 1.900 0 0 0 10.100 9.800V6.700"/><path d="M9.700 .6V5M7.500 2.800H11.900"/></svg>
<div id="ptitle"><b>Página 1 -</b> <span>Agregar título de página</span></div>
<div id="page">
<!--FACE-->
<svg width="509" height="508.5" viewBox="383 126 509 508.5">
<defs>
<linearGradient id="hg" gradientUnits="userSpaceOnUse" x1="478" y1="0" x2="797" y2="0"><stop offset="0" stop-color="#5b2f25"/><stop offset=".28" stop-color="#5d3026"/><stop offset=".55" stop-color="#512a21"/><stop offset=".8" stop-color="#44231c"/><stop offset="1" stop-color="#3b1f19"/></linearGradient>
<radialGradient id="fg" gradientUnits="userSpaceOnUse" cx="606" cy="400" r="152"><stop offset="0" stop-color="#fcc9ac"/><stop offset=".45" stop-color="#f9bfa2"/><stop offset=".75" stop-color="#efae94"/><stop offset="1" stop-color="#dc9982"/></radialGradient>
<linearGradient id="eg" x1=".12" y1=".12" x2=".92" y2=".88"><stop offset="0" stop-color="#f8f3cb"/><stop offset=".45" stop-color="#f0eabe"/><stop offset=".8" stop-color="#d8d1ad"/><stop offset="1" stop-color="#c5bea0"/></linearGradient>
<linearGradient id="ng" x1="0" y1="0" x2="1" y2="0"><stop offset="0" stop-color="#f99a8e"/><stop offset=".5" stop-color="#f4877b"/><stop offset="1" stop-color="#e56c5c"/></linearGradient>
<linearGradient id="mg" gradientUnits="userSpaceOnUse" x1="610" y1="455" x2="660" y2="485"><stop offset="0" stop-color="#fba8a0"/><stop offset=".6" stop-color="#f99990"/><stop offset="1" stop-color="#f28a82"/></linearGradient>
<filter id="b8" filterUnits="userSpaceOnUse" x="383" y="126" width="509" height="509"><feGaussianBlur stdDeviation="9"/></filter>
<filter id="b4" filterUnits="userSpaceOnUse" x="383" y="126" width="509" height="509"><feGaussianBlur stdDeviation="5"/></filter>
<filter id="b2" filterUnits="userSpaceOnUse" x="383" y="126" width="509" height="509"><feGaussianBlur stdDeviation="2.2"/></filter>
<clipPath id="hc"><path d="M534.8 531.6 C533.4 532.2 530.7 535.2 526.6 535.4 C522.5 535.6 515.3 534.1 510.0 532.6 C504.7 531.1 499.0 528.9 495.0 526.3 C491.0 523.7 488.3 520.3 486.0 517.0 C483.7 513.7 482.3 512.7 481.2 506.5 C480.1 500.3 479.8 489.1 479.3 480.0 C478.8 470.9 478.2 462.8 478.3 452.0 C478.4 441.2 479.1 426.7 480.0 415.0 C480.9 403.3 481.8 395.2 483.5 382.0 C485.2 368.8 486.8 349.8 490.5 336.0 C494.2 322.2 499.4 311.2 506.0 299.5 C512.6 287.8 519.9 275.3 530.0 265.7 C540.1 256.1 554.9 247.6 566.6 241.6 C578.3 235.6 588.3 232.3 600.0 229.5 C611.7 226.7 623.0 224.2 637.0 224.6 C651.0 225.0 668.1 226.8 684.0 232.0 C699.9 237.2 718.9 245.9 732.6 256.0 C746.3 266.1 758.0 281.0 766.4 292.3 C774.8 303.6 779.3 311.6 783.3 323.7 C787.3 335.8 788.9 352.1 790.6 364.8 C792.3 377.5 792.5 385.5 793.5 400.0 C794.5 414.5 796.1 438.7 796.6 452.0 C797.1 465.3 796.6 472.1 796.5 480.0 C796.4 487.9 796.7 493.4 795.8 499.6 C794.9 505.9 794.0 512.8 791.3 517.5 C788.6 522.2 783.9 525.4 779.4 528.0 C774.9 530.6 769.5 531.8 764.5 533.0 C759.5 534.2 753.6 535.6 749.6 535.4 C745.6 535.2 741.9 532.3 740.4 531.7 C740.9 529.9 742.8 524.8 743.6 521.0 C744.4 517.2 745.0 516.7 745.4 509.0 C745.8 501.3 745.8 483.5 745.9 475.0 C746.0 466.5 746.0 464.4 745.8 458.0 C745.6 451.6 745.2 443.6 744.7 436.4 C744.2 429.2 743.5 422.1 742.6 415.0 C741.7 407.9 740.5 400.2 739.4 393.8 C738.3 387.4 737.3 381.6 736.2 376.8 C735.1 372.0 734.8 368.2 733.0 365.0 C731.2 361.8 728.9 359.7 725.5 357.7 C722.1 355.7 717.0 355.1 712.8 353.2 C708.5 351.3 704.8 349.9 700.0 346.5 C695.2 343.1 691.0 338.8 684.3 333.0 C677.6 327.2 667.9 317.8 660.0 311.6 C652.1 305.4 640.8 298.3 637.0 295.6 C633.3 298.3 622.7 305.0 615.0 311.6 C607.3 318.2 597.5 329.0 590.8 335.0 C584.1 341.0 579.7 344.4 575.0 347.5 C570.3 350.6 566.6 351.5 562.4 353.4 C558.2 355.3 553.1 356.9 549.7 358.7 C546.3 360.5 544.1 361.7 542.2 364.0 C540.4 366.3 539.6 368.9 538.6 372.5 C537.6 376.1 537.3 378.2 536.5 385.3 C535.7 392.4 534.6 406.5 533.7 415.0 C532.8 423.5 531.8 429.3 531.0 436.4 C530.2 443.5 529.3 451.3 528.9 457.7 C528.5 464.1 528.4 466.4 528.5 475.0 C528.6 483.6 528.8 501.3 529.3 509.0 C529.8 516.7 530.5 517.2 531.4 521.0 C532.3 524.8 534.2 529.8 534.8 531.6Z"/></clipPath>
<clipPath id="fc"><path d="M524 320 L524 453 C524 482 566 521.5 637.5 521.5 C709 521.5 751 482 751 453 L751 320 C751 280 524 280 524 320Z"/></clipPath>
</defs>
<path d="M527 440 L527 512 C545 509 560 506 575 503 L700 503 C715 506 730 509 748 512 L748 440Z" fill="#30110f"/>
<path d="M524 320 L524 453 C524 482 566 521.5 637.5 521.5 C709 521.5 751 482 751 453 L751 320 C751 280 524 280 524 320Z" fill="url(#fg)"/>
<g clip-path="url(#fc)">
  <path d="M520 300 L637 280 L760 300 L752 372 L728 366 L684 342 L637 304 L590 342 L545 368 L528 380Z" fill="#d99480" opacity=".55" filter="url(#b4)"/>
  <path d="M540 366 L534 415 L529 458 L529 500" fill="none" stroke="#c07f66" stroke-width="9" opacity=".7" filter="url(#b2)"/><rect x="518" y="370" width="22" height="140" fill="#d8907c" opacity=".4" filter="url(#b4)"/>
  <path d="M734 366 L741 415 L746 458 L746 500" fill="none" stroke="#b8765f" stroke-width="9" opacity=".7" filter="url(#b2)"/><rect x="734" y="370" width="22" height="140" fill="#d38a76" opacity=".45" filter="url(#b4)"/>
  <ellipse cx="637" cy="530" rx="90" ry="14" fill="#e39d88" opacity=".5" filter="url(#b4)"/>
</g>
<path d="M534.8 531.6 C533.4 532.2 530.7 535.2 526.6 535.4 C522.5 535.6 515.3 534.1 510.0 532.6 C504.7 531.1 499.0 528.9 495.0 526.3 C491.0 523.7 488.3 520.3 486.0 517.0 C483.7 513.7 482.3 512.7 481.2 506.5 C480.1 500.3 479.8 489.1 479.3 480.0 C478.8 470.9 478.2 462.8 478.3 452.0 C478.4 441.2 479.1 426.7 480.0 415.0 C480.9 403.3 481.8 395.2 483.5 382.0 C485.2 368.8 486.8 349.8 490.5 336.0 C494.2 322.2 499.4 311.2 506.0 299.5 C512.6 287.8 519.9 275.3 530.0 265.7 C540.1 256.1 554.9 247.6 566.6 241.6 C578.3 235.6 588.3 232.3 600.0 229.5 C611.7 226.7 623.0 224.2 637.0 224.6 C651.0 225.0 668.1 226.8 684.0 232.0 C699.9 237.2 718.9 245.9 732.6 256.0 C746.3 266.1 758.0 281.0 766.4 292.3 C774.8 303.6 779.3 311.6 783.3 323.7 C787.3 335.8 788.9 352.1 790.6 364.8 C792.3 377.5 792.5 385.5 793.5 400.0 C794.5 414.5 796.1 438.7 796.6 452.0 C797.1 465.3 796.6 472.1 796.5 480.0 C796.4 487.9 796.7 493.4 795.8 499.6 C794.9 505.9 794.0 512.8 791.3 517.5 C788.6 522.2 783.9 525.4 779.4 528.0 C774.9 530.6 769.5 531.8 764.5 533.0 C759.5 534.2 753.6 535.6 749.6 535.4 C745.6 535.2 741.9 532.3 740.4 531.7 C740.9 529.9 742.8 524.8 743.6 521.0 C744.4 517.2 745.0 516.7 745.4 509.0 C745.8 501.3 745.8 483.5 745.9 475.0 C746.0 466.5 746.0 464.4 745.8 458.0 C745.6 451.6 745.2 443.6 744.7 436.4 C744.2 429.2 743.5 422.1 742.6 415.0 C741.7 407.9 740.5 400.2 739.4 393.8 C738.3 387.4 737.3 381.6 736.2 376.8 C735.1 372.0 734.8 368.2 733.0 365.0 C731.2 361.8 728.9 359.7 725.5 357.7 C722.1 355.7 717.0 355.1 712.8 353.2 C708.5 351.3 704.8 349.9 700.0 346.5 C695.2 343.1 691.0 338.8 684.3 333.0 C677.6 327.2 667.9 317.8 660.0 311.6 C652.1 305.4 640.8 298.3 637.0 295.6 C633.3 298.3 622.7 305.0 615.0 311.6 C607.3 318.2 597.5 329.0 590.8 335.0 C584.1 341.0 579.7 344.4 575.0 347.5 C570.3 350.6 566.6 351.5 562.4 353.4 C558.2 355.3 553.1 356.9 549.7 358.7 C546.3 360.5 544.1 361.7 542.2 364.0 C540.4 366.3 539.6 368.9 538.6 372.5 C537.6 376.1 537.3 378.2 536.5 385.3 C535.7 392.4 534.6 406.5 533.7 415.0 C532.8 423.5 531.8 429.3 531.0 436.4 C530.2 443.5 529.3 451.3 528.9 457.7 C528.5 464.1 528.4 466.4 528.5 475.0 C528.6 483.6 528.8 501.3 529.3 509.0 C529.8 516.7 530.5 517.2 531.4 521.0 C532.3 524.8 534.2 529.8 534.8 531.6Z" fill="url(#hg)"/>
<g clip-path="url(#hc)">
  <ellipse cx="571" cy="310" rx="36" ry="25" transform="rotate(-30 571 310)" fill="#77524b" opacity=".64" filter="url(#b8)"/>
  <path d="M637 296 L684 333 L728 357 L742 384 L746 520" fill="none" stroke="#2e1713" stroke-width="14" opacity=".45" filter="url(#b4)"/>
  <path d="M484 400 L480 452 L483 505" fill="none" stroke="#6d3c2f" stroke-width="8" opacity=".45" filter="url(#b4)"/>
  <path d="M535 385 L528 470 L531 528" fill="none" stroke="#3f1f19" stroke-width="9" opacity=".5" filter="url(#b4)"/>
  <path d="M740 395 L746.500 460 L744 528" fill="none" stroke="#6e3b2e" stroke-width="7" opacity=".6" filter="url(#b4)"/>
  <path d="M484 514 C490 526 508 533 532 533" fill="none" stroke="#86604f" stroke-width="4" opacity=".6" filter="url(#b2)"/>
  <path d="M743 533 C762 534 782 528 793 512" fill="none" stroke="#6b4a3d" stroke-width="4" opacity=".55" filter="url(#b2)"/>
  <path d="M637 224 C700 226 770 280 790 365 L800 460 L800 224Z" fill="#2f1814" opacity=".22" filter="url(#b8)"/>
</g>
<!-- eyebrows -->
<path d="M572.6 386.6 C573.6 377.500 580.500 371 589 370.900 C595.500 370.900 600.500 372.800 603.800 375.700" fill="none" stroke="#2a1715" stroke-width="10.200" stroke-linecap="round"/>
<path d="M672.200 375.500 C675.500 372.600 680.500 370.600 687 370.600 C695.500 370.700 701.500 377 702.700 385.800" fill="none" stroke="#2a1715" stroke-width="10.200" stroke-linecap="round"/>
<!-- eyes -->
<circle cx="598.3" cy="404" r="16.5" fill="url(#eg)"/>
<circle cx="676.9" cy="404" r="16.5" fill="url(#eg)"/>
<circle cx="601.6" cy="405.2" r="8.600" fill="#2a1414"/>
<circle cx="673.7" cy="405.200" r="8.600" fill="#2a1414"/>
<!-- nose -->
<path d="M637.8 410.6 C644.2 410.6 647.4 418 647.4 428.5 C647.4 436.8 643.5 441.4 637.6 441.4 C631.7 441.4 627.8 436.8 627.8 428.5 C627.8 418 631.4 410.6 637.8 410.6Z" fill="url(#ng)"/>
<!-- mouth -->
<path d="M603.600 460.600 C607.500 474 622 482.400 638 482.400 C654 482.400 668.500 474 672.600 459.500 A3.800 3.800 0 0 0 665.300 457.600 C661.500 466 651 471.200 638 471.200 C625 471.200 614.600 466.500 611 458.500 A3.800 3.800 0 0 0 603.600 460.600Z" fill="url(#mg)"/>
</svg>
<!--/FACE-->
</div>

</body>
</html>
